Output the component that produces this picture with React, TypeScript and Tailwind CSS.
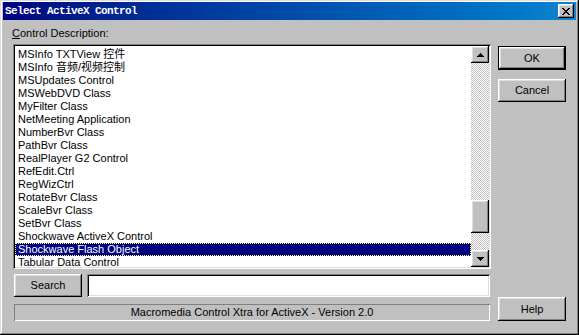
const items = [
  'MSInfo TXTView 控件',
  'MSInfo 音频/视频控制',
  'MSUpdates Control',
  'MSWebDVD Class',
  'MyFilter Class',
  'NetMeeting Application',
  'NumberBvr Class',
  'PathBvr Class',
  'RealPlayer G2 Control',
  'RefEdit.Ctrl',
  'RegWizCtrl',
  'RotateBvr Class',
  'ScaleBvr Class',
  'SetBvr Class',
  'Shockwave ActiveX Control',
  'Shockwave Flash Object',
  'Tabular Data Control',
];

const raised =
  'bg-[#c0c0c0] shadow-[inset_-1px_-1px_0_#000,inset_1px_1px_0_#fff,inset_-2px_-2px_0_#808080,inset_2px_2px_0_#dfdfdf]';
const sunken =
  'shadow-[inset_1px_1px_0_#808080,inset_-1px_-1px_0_#fff,inset_2px_2px_0_#000,inset_-2px_-2px_0_#dfdfdf]';

function Arrow({ down }: { down?: boolean }) {
  return (
    <svg width="7" height="4" viewBox="0 0 7 4" shapeRendering="crispEdges">
      <path
        d={
          down
            ? 'M0 0h7v1h-7z M1 1h5v1h-5z M2 2h3v1h-3z M3 3h1v1h-1z'
            : 'M3 0h1v1h-1z M2 1h3v1h-3z M1 2h5v1h-5z M0 3h7v1h-7z'
        }
        fill="#000"
      />
    </svg>
  );
}

export default function App() {
  const selected = 'Shockwave Flash Object';

  return (
    <div className="w-[579px] h-[335px] bg-[#c0c0c0] shadow-[inset_-1px_-1px_0_#000,inset_1px_1px_0_#dfdfdf,inset_-2px_-2px_0_#808080,inset_2px_2px_0_#fff] pt-[2px] px-[3px] flex flex-col font-['Liberation_Sans','Noto_Sans_CJK_SC',sans-serif] text-[11px] leading-[13px] text-black select-none">
      {/* title bar */}
      <div className="h-[18px] flex items-center justify-between bg-linear-to-r from-[#000080] to-[#1084d0] pl-[2px] pr-[2px]">
        <span className="font-['Liberation_Mono',monospace] font-bold text-[11px] tracking-[-0.6px] text-white">
          Select ActiveX Control
        </span>
        <div className={`w-[16px] h-[14px] flex items-center justify-center ${raised}`}>
          <svg width="8" height="7" viewBox="0 0 8 7" shapeRendering="crispEdges">
            <path
              d="M0 0h2v1h-2z M6 0h2v1h-2z M1 1h2v1h-2z M5 1h2v1h-2z M2 2h4v1h-4z M3 3h2v1h-2z M2 4h4v1h-4z M1 5h2v1h-2z M5 5h2v1h-2z M0 6h2v1h-2z M6 6h2v1h-2z"
              fill="#000"
            />
          </svg>
        </div>
      </div>

      <div className="flex pl-[10px]">
        {/* left column */}
        <div className="w-[478px] flex flex-col">
          <div className="mt-[7px] ml-[-1px] h-[13px]">
            <span className="underline underline-offset-[1px]">C</span>ontrol Description:
          </div>

          <div className={`mt-[4px] h-[225px] bg-white p-[2px] flex ${sunken}`}>
            <div className="flex-1 overflow-hidden pt-[2px]">
              {items.map((name) => {
                const isSel = name === selected;
                return (
                  <div
                    key={name}
                    className={
                      isSel
                        ? 'h-[13px] pl-[3px] whitespace-nowrap bg-[#000080] text-white outline-1 outline-dotted outline-[#ffff80] -outline-offset-1'
                        : 'h-[13px] pl-[3px] whitespace-nowrap'
                    }
                  >
                    {name}
                  </div>
                );
              })}
            </div>
            <div className="w-[18px] flex flex-col">
              <div className={`h-[17px] flex items-center justify-center ${raised}`}>
                <Arrow />
              </div>
              <div className="flex-1 flex flex-col bg-[image:repeating-conic-gradient(#fff_0_25%,#c0c0c0_0_50%)] bg-[length:2px_2px]">
                <div className={`mt-[137px] h-[33px] ${raised}`} />
              </div>
              <div className={`h-[17px] flex items-center justify-center ${raised}`}>
                <Arrow down />
              </div>
            </div>
          </div>

          <div className="mt-[5px] h-[23px] flex">
            <div className={`ml-[1px] w-[68px] flex items-center justify-center ${raised}`}>Search</div>
            <div className={`ml-[5px] w-[403px] bg-white ${sunken}`} />
          </div>

          <div className="mt-[7px] ml-[1px] w-[476px] h-[17px] flex items-center justify-center shadow-[inset_1px_1px_0_#808080,inset_-1px_-1px_0_#fff]">
            Macromedia Control Xtra for ActiveX - Version 2.0
          </div>
        </div>

        {/* right column */}
        <div className="ml-[7px] w-[68px] flex flex-col">
          <div className="mt-[26px] h-[24px] border border-black">
            <div className={`h-full flex items-center justify-center ${raised}`}>OK</div>
          </div>
          <div className={`mt-[9px] h-[23px] flex items-center justify-center ${raised}`}>Cancel</div>
          <div className={`mt-[195px] h-[24px] flex items-center justify-center ${raised}`}>Help</div>
        </div>
      </div>
    </div>
  );
}
